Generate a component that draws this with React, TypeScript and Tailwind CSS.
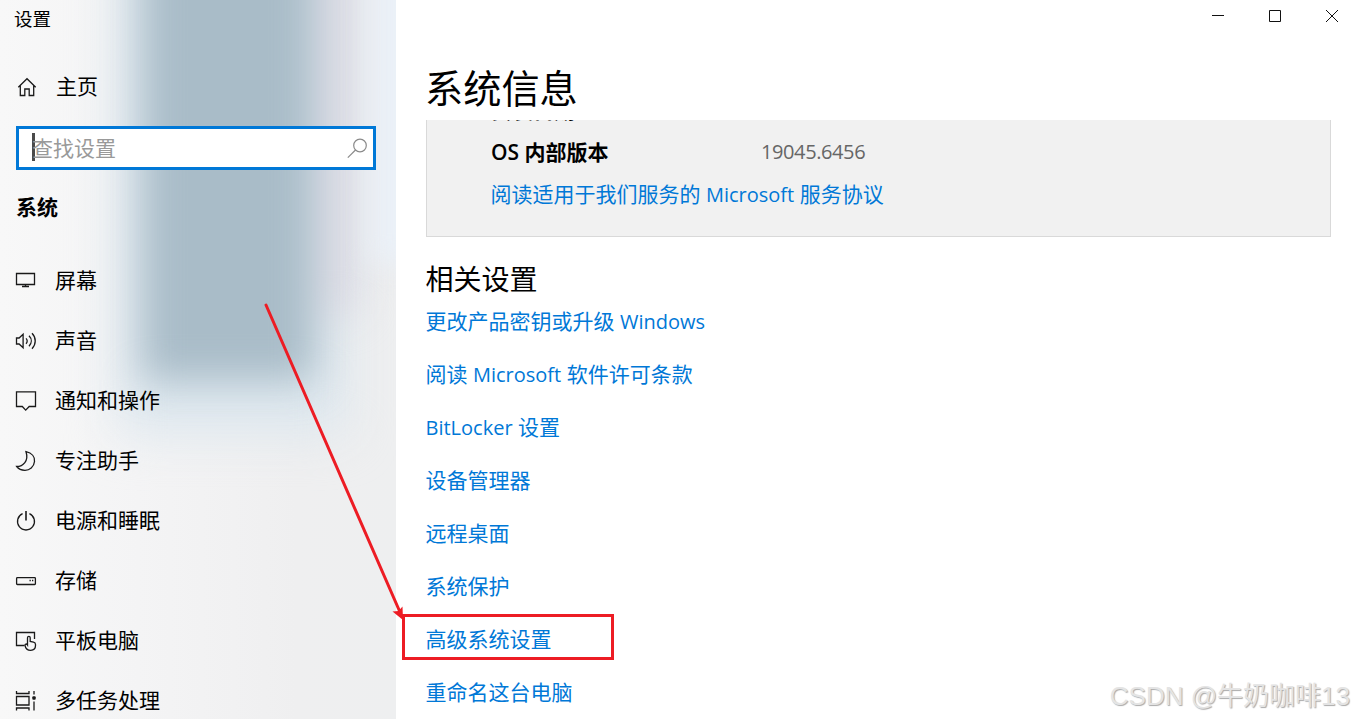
import type { ReactNode } from 'react';

function Icon({ children }: { children: ReactNode }) {
  return (
    <svg
      className="h-[22px] w-[22px] shrink-0 overflow-visible"
      viewBox="0 0 22 22"
      fill="none"
      stroke="#1a1a1a"
      strokeWidth="1.3"
    >
      {children}
    </svg>
  );
}

// Latin runs are set slightly smaller than the Chinese text around them
function Latin({ children }: { children: ReactNode }) {
  return <span className="text-[20px]">{children}</span>;
}

const menu = [
  {
    label: '屏幕',
    icon: (
      <Icon>
        <path d="M1.5 3.5h18v11h-18zM10.5 14.5v2M7 16.5h7" />
      </Icon>
    ),
  },
  {
    label: '声音',
    icon: (
      <Icon>
        <path d="M1.5 8v6h2.6l4 3.7V4.3L4.1 8zM11 8.4c1.6 1.6 1.6 3.8 0 5.4M14 5.8c3 3 3 7.2 0 10.4M17 3.3c4.3 4.3 4.3 11 0 15.4" />
      </Icon>
    ),
  },
  {
    label: '通知和操作',
    icon: (
      <Icon>
        <path d="M1.5 1.9h19v14.6h-6.3l-3.5 3.6-3.4-3.6H1.5z" />
      </Icon>
    ),
  },
  {
    label: '专注助手',
    icon: (
      <Icon>
        <path d="M11 1.7C17 3 20 7 19.5 11.5 19 17 14.5 20.3 10 20.3 6.5 20.3 3.5 19 1.7 16.5 8 16.5 14 11 11 1.7z" />
      </Icon>
    ),
  },
  {
    label: '电源和睡眠',
    icon: (
      <Icon>
        <path d="M7.6 3.7a8.5 8.5 0 1 0 6.8 0" />
        <path d="M11 1v9.500" strokeWidth="1.6" />
      </Icon>
    ),
  },
  {
    label: '存储',
    icon: (
      <Icon>
        <rect x="1.6" y="7.6" width="18.8" height="6.9" rx=".8" />
        <path d="M14.5 10.500h1.300M17 10.500h1.300" />
      </Icon>
    ),
  },
  {
    label: '平板电脑',
    icon: (
      <Icon>
        <path d="M9.5 15.5h-8v-13h18v6.500" />
        <path d="M12.5 15V7.8c0-1.900 2.700-1.900 2.700 0V11.500l3.300.700c1.400.300 2 1 2 2.400v1c0 3-1.800 4.700-4.700 4.700-3.500 0-5.300-2-5.800-5 0-1.500 1.500-1.800 2.500-.3z" />
      </Icon>
    ),
  },
  {
    label: '多任务处理',
    icon: (
      <Icon>
        <path d="M1.5 6.500h12.500v8.500h-12.500zM1.500 1v2.500h12.500V1M1.500 20.500V18h12.500v2.500M19 1v3.500M19 11.500v9" />
        <rect x="17.3" y="6.3" width="3.4" height="3.4" rx="1" fill="#1a1a1a" stroke="none" />
      </Icon>
    ),
  },
];

const links = [
  <>
    更改产品密钥或升级 <Latin>Windows</Latin>
  </>,
  <>
    阅读 <Latin>Microsoft</Latin> 软件许可条款
  </>,
  <>
    <Latin>BitLocker</Latin> 设置
  </>,
  '设备管理器',
  '远程桌面',
  '系统保护',
  '高级系统设置',
  '重命名这台电脑',
];

function Sidebar() {
  return (
    <aside className="relative isolate h-full w-[396px] shrink-0 overflow-hidden bg-[linear-gradient(90deg,#f8f8f8_0%,#f4f4f5_35%,#efeff0_75%,#eeeff0_100%)]">
      {/* Acrylic backdrop */}
      <div className="absolute -top-24 left-[116px] -z-10 h-[530px] w-[230px] bg-[#dde7ee] blur-[24px]" />
      <div className="absolute -top-24 left-[306px] -z-10 h-[410px] w-[50px] bg-[#dcdbe4] blur-[20px]" />
      <div className="absolute -top-24 left-[370px] -z-10 h-[360px] w-[60px] bg-[#eaf0f7] blur-[14px]" />
      <div className="absolute -top-24 left-[142px] -z-10 h-[476px] w-[172px] bg-[#a9bcc8] blur-[19px]" />

      <div className="flex h-[38px] items-center pl-[14px] text-[18.5px]">设置</div>

      <div className="mt-[19px] flex h-[60px] items-center pl-4">
        <Icon>
          <path d="M2.3 11.200 11 2.700l8.700 8.500M4.300 9.500v10h4.500V13h4.400v6.500h4.500v-10" />
        </Icon>
        <span className="ml-[18px] pb-[2px]">主页</span>
      </div>

      <div className="mt-[9px] ml-4 flex h-11 w-[360px] items-center border-[3px] border-[#0078d7] bg-white pr-[5px] pl-[13px]">
        <span className="-mt-0.5 h-7 w-[3px] bg-[#4a4a4a]" />
        <span className="-ml-[3px] flex-1 text-[#999]">查找设置</span>
        <svg className="h-[22px] w-[22px]" viewBox="0 0 22 22" fill="none" stroke="#8a8a8a" strokeWidth="1.2">
          <circle cx="14" cy="8.5" r="6.3" />
          <path d="M9.5 13 1.800 20.700" />
        </svg>
      </div>

      <div className="mb-[7px] flex h-[74px] items-center pl-4 font-bold">系统</div>

      <nav>
        {menu.map((item) => (
          <a key={item.label} className="flex h-[60px] items-center pl-[15px]">
            {item.icon}
            <span className="ml-[18px] pb-[2px]">{item.label}</span>
          </a>
        ))}
      </nav>
    </aside>
  );
}

function Content() {
  return (
    <main className="min-w-0 flex-1 pl-[30px]">
      {/* Window controls */}
      <div className="flex h-8 items-center justify-end gap-[45px] pr-4">
        <svg className="h-3 w-3" viewBox="0 0 12 12" stroke="#111">
          <path d="M0 5.500h12" />
        </svg>
        <svg className="h-3 w-3" viewBox="0 0 12 12" fill="none" stroke="#111">
          <path d="M.5.5h11v11H.5z" />
        </svg>
        <svg className="h-3 w-3" viewBox="0 0 12 12" stroke="#111">
          <path d="M0 0l12 12M12 0 0 12" />
        </svg>
      </div>

      <h1 className="mt-[26px] -ml-px flex h-[62px] items-center pb-[2px] text-[38.2px]">系统信息</h1>

      <section className="h-[117px] w-[905px] overflow-hidden border-x border-b border-[#d9d9d9] bg-[#f1f1f1] pl-16">
        <div className="-mt-[30px] flex h-[41px] items-center">
          <span className="w-[270px] font-bold">安装日期</span>
          <span className="pt-px text-[20px] tracking-[-0.4px] text-[#666]">2024/6/1</span>
        </div>
        <div className="flex h-[42px] items-center">
          <span className="w-[270px] font-bold">
            <span className="font-semibold">OS</span> 内部版本
          </span>
          <span className="text-[20px] tracking-[-0.4px] text-[#666]">19045.6456</span>
        </div>
        <a className="flex h-[42px] items-center whitespace-pre text-[#0078d7]">
          <span className="-ml-[0.5px]">
            阅读适用于我们服务的 <Latin>Microsoft</Latin> 服务协议
          </span>
        </a>
      </section>

      <h2 className="mt-[26px] -ml-[0.5px] flex h-8 items-center text-[28px]">相关设置</h2>
      <ul>
        {links.map((link, i) => (
          <li key={i} className="-ml-[0.5px] flex h-[53px] items-center whitespace-pre text-[#0078d7]">
            {link}
          </li>
        ))}
      </ul>
    </main>
  );
}

export default function App() {
  return (
    <div className="relative flex h-[719px] w-[1354px] overflow-hidden bg-white font-['Open_Sans','Noto_Sans_CJK_SC',sans-serif] text-[21px] leading-none whitespace-nowrap text-black">
      <Sidebar />
      <Content />

      {/* Annotation arrow and frame */}
      <svg className="pointer-events-none absolute inset-0 h-full w-full" viewBox="0 0 1354 719">
        <path d="M266 305 399.500 611" stroke="#ed1c24" strokeWidth="3" strokeLinecap="round" />
        <path d="M403 620 392.500 611.500 398.500 611 402.500 606.500z" fill="#ed1c24" />
      </svg>
      <div className="absolute top-[614px] left-[402px] h-[46px] w-[212px] border-[3px] border-[#ed1c24]" />

      <div className="absolute right-[4px] bottom-[10px] font-['Liberation_Sans','Noto_Sans_CJK_SC',sans-serif] text-[26px] text-[#e4e4e4] [text-shadow:1px_1px_1px_#aaa]">
        CSDN @牛奶咖啡13
      </div>
    </div>
  );
}
